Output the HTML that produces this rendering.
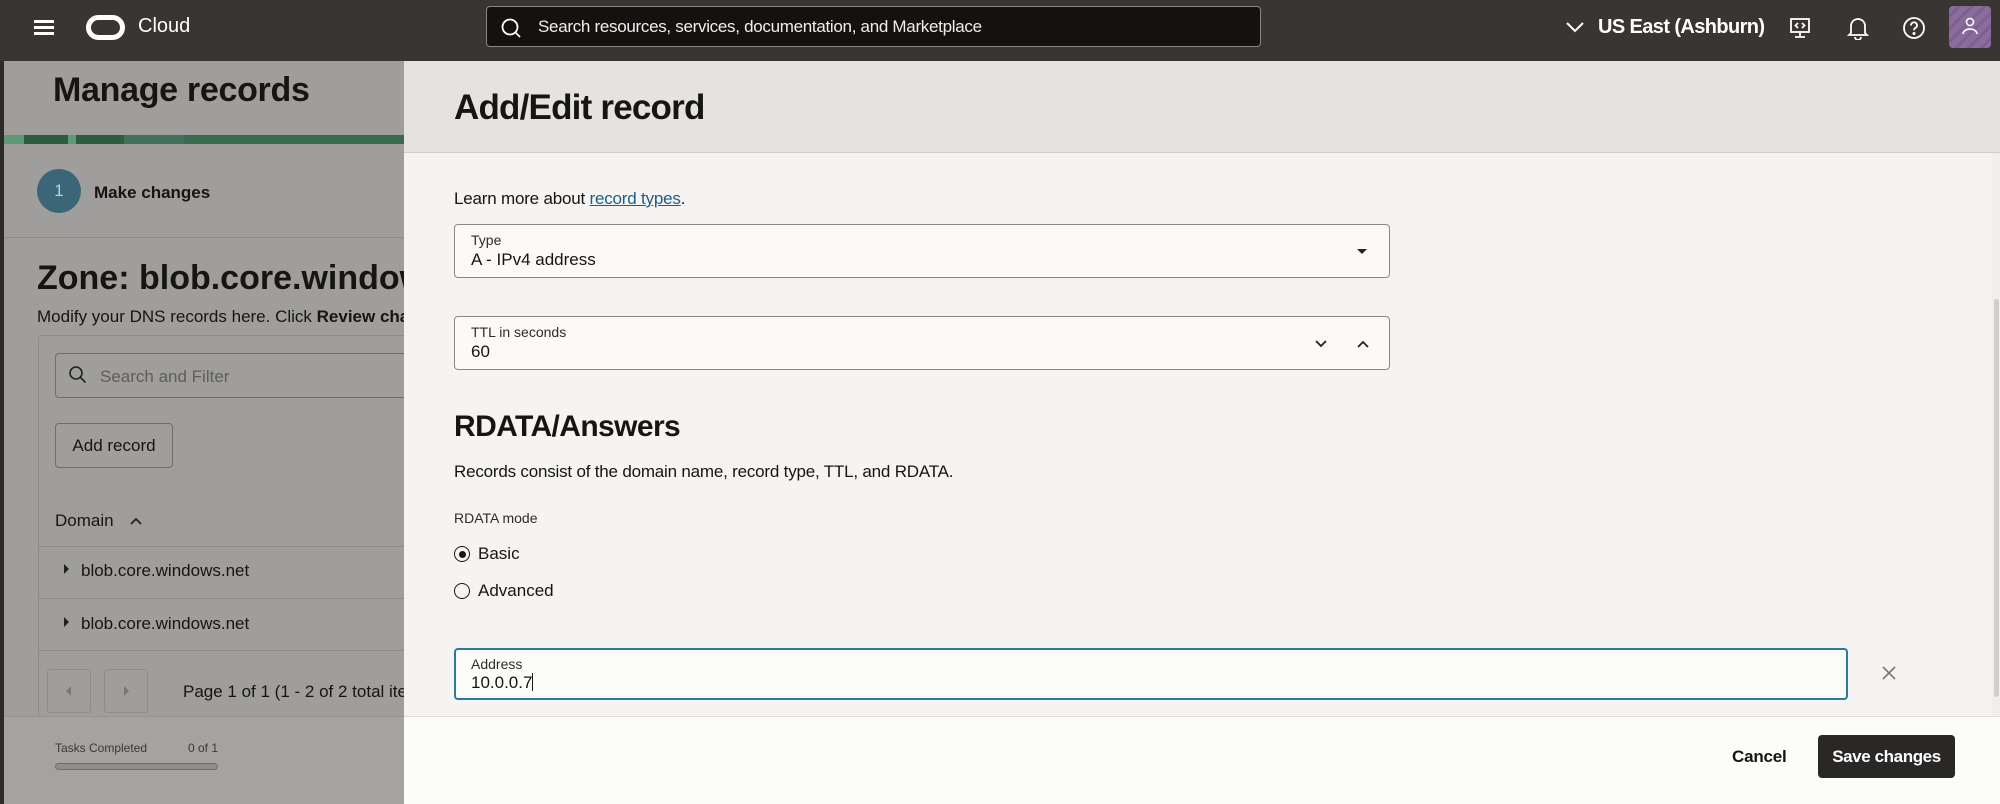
<!DOCTYPE html>
<html><head><meta charset="utf-8"><style>
*{box-sizing:border-box;margin:0;padding:0}
body{width:2000px;height:804px;overflow:hidden;font-family:"Liberation Sans",sans-serif;background:#9f9e9d;position:relative;color:#161513}
.a{position:absolute;white-space:nowrap}
#top{position:absolute;left:0;top:0;width:2000px;height:61px;background:#393532}
#left{position:absolute;left:0;top:61px;width:404px;height:743px;background:#9f9e9d;overflow:hidden}
#drawer{position:absolute;left:404px;top:61px;width:1596px;height:743px;background:#f5f4f2}
.box{position:absolute;border:1px solid #8a8886;border-radius:4px;background:#fbfaf9}
.lbl{font-size:14px;color:#2e2c2a}
.val{font-size:17px;color:#161513}
</style></head><body>
<div id="top">
  <div class="a" style="left:34px;top:20px;width:20px;height:3px;background:#fff;box-shadow:0 6px 0 #fff,0 12px 0 #fff"></div>
  <div class="a" style="left:86px;top:15px;width:39px;height:25px;border:5px solid #fff;border-radius:13px"></div>
  <div class="a" style="left:138px;top:15px;font-size:20px;color:#fff">Cloud</div>
  <div class="a" style="left:486px;top:6px;width:775px;height:41px;background:#141210;border:1px solid #8a8886;border-radius:4px"></div>
  <svg class="a" style="left:500px;top:17px" width="22" height="22" viewBox="0 0 22 22"><circle cx="10" cy="10" r="7.5" fill="none" stroke="#fff" stroke-width="1.8"/><path d="M15 15l5 5" stroke="#fff" stroke-width="1.8"/></svg>
  <div class="a" style="left:538px;top:17px;font-size:17px;color:#f0efee;letter-spacing:-0.3px">Search resources, services, documentation, and Marketplace</div>
  <svg class="a" style="left:1565px;top:20px" width="20" height="14"><path d="M2 3l8 8 8-8" fill="none" stroke="#fff" stroke-width="2"/></svg>
  <div class="a" style="left:1598px;top:16px;font-size:20px;font-weight:bold;color:#fff;letter-spacing:-0.6px">US East (Ashburn)</div>
  <svg class="a" style="left:1789px;top:17px" width="22" height="22" viewBox="0 0 22 22" fill="none" stroke="#fff" stroke-width="1.8"><rect x="2" y="2" width="18" height="13"/><path d="M11 15v4M6 20h10M9 6l-2.5 2.5L9 11M13 6l2.5 2.5L13 11"/></svg>
  <svg class="a" style="left:1847px;top:16px" width="22" height="24" viewBox="0 0 22 24" fill="none" stroke="#fff" stroke-width="1.8"><path d="M4 17V10a7 7 0 0114 0v7l2 2H2z"/><path d="M8 21a3 3 0 006 0"/></svg>
  <svg class="a" style="left:1902px;top:16px" width="24" height="24" viewBox="0 0 24 24" fill="none" stroke="#fff" stroke-width="1.8"><circle cx="12" cy="12" r="10"/><path d="M9 9.5a3 3 0 115 2c-1.2.8-2 1.3-2 2.8"/><circle cx="12" cy="17.5" r=".6" fill="#fff"/></svg>
  <div class="a" style="left:1949px;top:6px;width:42px;height:42px;border-radius:4px;background:repeating-linear-gradient(135deg,#8a6d9c 0 6px,#7d6190 6px 9px)"></div>
  <svg class="a" style="left:1960px;top:15px" width="20" height="22" viewBox="0 0 20 22" fill="none" stroke="#fff" stroke-width="1.5"><circle cx="10" cy="7" r="3.5"/><path d="M3 19a7 5 0 0114 0"/></svg>
</div>

<div id="left">
  <div class="a" style="left:0;top:0;width:4px;height:743px;background:#2d2b29"></div>
  <div class="a" style="left:53px;top:10px;font-size:34px;font-weight:bold;color:#161513;letter-spacing:-0.3px">Manage records</div>
  <div class="a" style="left:4px;top:74px;width:400px;height:9px;background:linear-gradient(90deg,#5f9a78 0 5%,#2e5c43 5% 16%,#5f9a78 16% 18%,#2e5c43 18% 30%,#43705a 30% 45%,#3a6a50 45% 100%)"></div>
  <div class="a" style="left:37px;top:108px;width:44px;height:44px;border-radius:50%;background:#3a6677;color:#bcd;font-size:17px;text-align:center;line-height:44px">1</div>
  <div class="a" style="left:94px;top:122px;font-size:17px;font-weight:bold">Make changes</div>
  <div class="a" style="left:4px;top:176px;width:400px;height:1px;background:#8e8d8c"></div>
  <div class="a" style="left:37px;top:198px;font-size:34px;font-weight:bold">Zone: blob.core.windows.net</div>
  <div class="a" style="left:37px;top:246px;font-size:17px">Modify your DNS records here. Click <b>Review changes</b></div>
  <div class="a" style="left:38px;top:274px;width:400px;height:400px;border:1px solid #8e8d8c;border-radius:4px"></div>
  <div class="a" style="left:55px;top:292px;width:380px;height:45px;border:1px solid #6f6e6d;border-radius:4px"></div>
  <svg class="a" style="left:68px;top:304px" width="20" height="20" viewBox="0 0 20 20" fill="none" stroke="#222" stroke-width="1.6"><circle cx="8" cy="8" r="6"/><path d="M12.5 12.5l5 5"/></svg>
  <div class="a" style="left:100px;top:306px;font-size:17px;color:#5e5d5c">Search and Filter</div>
  <div class="a" style="left:55px;top:362px;width:118px;height:45px;border:1px solid #6f6e6d;border-radius:4px;font-size:17px;text-align:center;line-height:43px">Add record</div>
  <div class="a" style="left:55px;top:450px;font-size:17px">Domain</div>
  <svg class="a" style="left:129px;top:455px" width="14" height="10"><path d="M2 8l5-5 5 5" fill="none" stroke="#222" stroke-width="1.8"/></svg>
  <div class="a" style="left:38px;top:485px;width:370px;height:1px;background:#8e8d8c"></div>
  <div class="a" style="left:64px;top:503px;width:0;height:0;border-left:5px solid #222;border-top:5px solid transparent;border-bottom:5px solid transparent"></div>
  <div class="a" style="left:81px;top:500px;font-size:17px">blob.core.windows.net</div>
  <div class="a" style="left:38px;top:537px;width:370px;height:1px;background:#8e8d8c"></div>
  <div class="a" style="left:64px;top:556px;width:0;height:0;border-left:5px solid #222;border-top:5px solid transparent;border-bottom:5px solid transparent"></div>
  <div class="a" style="left:81px;top:553px;font-size:17px">blob.core.windows.net</div>
  <div class="a" style="left:38px;top:589px;width:370px;height:1px;background:#8e8d8c"></div>
  <div class="a" style="left:47px;top:608px;width:44px;height:44px;border:1px solid #8e8d8c;border-radius:3px"></div>
  <div class="a" style="left:66px;top:625px;width:0;height:0;border-right:5px solid #777;border-top:5px solid transparent;border-bottom:5px solid transparent"></div>
  <div class="a" style="left:104px;top:608px;width:44px;height:44px;border:1px solid #8e8d8c;border-radius:3px"></div>
  <div class="a" style="left:124px;top:625px;width:0;height:0;border-left:5px solid #777;border-top:5px solid transparent;border-bottom:5px solid transparent"></div>
  <div class="a" style="left:183px;top:621px;font-size:17px">Page 1 of 1 (1 - 2 of 2 total items)</div>
  <div class="a" style="left:4px;top:655px;width:400px;height:88px;background:#a4a3a2;border-top:1px solid #959493"></div>
  <div class="a" style="left:55px;top:680px;font-size:12px;color:#3a3938">Tasks Completed</div>
  <div class="a" style="left:188px;top:680px;font-size:12px;color:#3a3938">0 of 1</div>
  <div class="a" style="left:55px;top:702px;width:163px;height:7px;border:1px solid #6f6e6d;border-radius:4px;background:#8f8e8d"></div>
</div>

<div id="drawer">
  <div class="a" style="left:0;top:0;width:1596px;height:92px;background:#e4e3e1;border-bottom:1px solid #cfcecc"></div>
  <div class="a" style="left:50px;top:27px;font-size:35px;font-weight:bold;letter-spacing:-0.8px">Add/Edit record</div>
  <div class="a" style="right:0;top:92px;width:8px;height:624px;background:#f0efed"></div>
  <div class="a" style="right:1px;top:238px;width:5px;height:398px;background:#cfcecc;border-radius:3px"></div>
  <div class="a" style="left:50px;top:128px;font-size:17px;letter-spacing:-0.2px">Learn more about <span style="color:#1f5e87;text-decoration:underline">record types</span>.</div>
  <div class="box" style="left:50px;top:163px;width:936px;height:54px"></div>
  <div class="a lbl" style="left:67px;top:171px">Type</div>
  <div class="a val" style="left:67px;top:189px">A - IPv4 address</div>
  <div class="a" style="left:953px;top:188px;width:0;height:0;border-top:5px solid #222;border-left:5px solid transparent;border-right:5px solid transparent"></div>
  <div class="box" style="left:50px;top:255px;width:936px;height:54px"></div>
  <div class="a lbl" style="left:67px;top:263px">TTL in seconds</div>
  <div class="a val" style="left:67px;top:281px">60</div>
  <svg class="a" style="left:910px;top:278px" width="14" height="10"><path d="M2 2l5 5 5-5" fill="none" stroke="#222" stroke-width="1.8"/></svg>
  <svg class="a" style="left:952px;top:278px" width="14" height="10"><path d="M2 8l5-5 5 5" fill="none" stroke="#222" stroke-width="1.8"/></svg>
  <div class="a" style="left:50px;top:349px;font-size:30px;font-weight:bold;letter-spacing:-0.6px">RDATA/Answers</div>
  <div class="a" style="left:50px;top:401px;font-size:17px;letter-spacing:-0.2px">Records consist of the domain name, record type, TTL, and RDATA.</div>
  <div class="a" style="left:50px;top:449px;font-size:14px;color:#2e2c2a">RDATA mode</div>
  <div class="a" style="left:50px;top:485px;width:16px;height:16px;border:1.5px solid #161513;border-radius:50%"></div>
  <div class="a" style="left:54.5px;top:489.5px;width:7px;height:7px;background:#161513;border-radius:50%"></div>
  <div class="a" style="left:74px;top:483px;font-size:17px">Basic</div>
  <div class="a" style="left:50px;top:522px;width:16px;height:16px;border:1.5px solid #161513;border-radius:50%;background:#f5f4f2"></div>
  <div class="a" style="left:74px;top:520px;font-size:17px">Advanced</div>
  <div class="box" style="left:50px;top:587px;width:1394px;height:52px;border:2px solid #2b7a99;background:#fcfcfb"></div>
  <div class="a lbl" style="left:67px;top:595px">Address</div>
  <div class="a val" style="left:67px;top:612px">10.0.0.7<span style="display:inline-block;width:1px;height:18px;background:#161513;vertical-align:-3px"></span></div>
  <svg class="a" style="left:1477px;top:604px" width="16" height="16"><path d="M2 2l12 12M14 2L2 14" stroke="#7a7876" stroke-width="1.6"/></svg>
  <div class="a" style="left:0;top:655px;width:1596px;height:88px;background:#fcfcfb;border-top:1px solid #dedddb"></div>
  <div class="a" style="left:1328px;top:686px;font-size:17px;font-weight:bold;color:#161513;letter-spacing:-0.2px">Cancel</div>
  <div class="a" style="left:1414px;top:674px;width:137px;height:43px;background:#2a2826;border-radius:4px;color:#fff;font-size:17px;font-weight:bold;text-align:center;line-height:43px;letter-spacing:-0.4px">Save changes</div>
</div>
</body></html>
